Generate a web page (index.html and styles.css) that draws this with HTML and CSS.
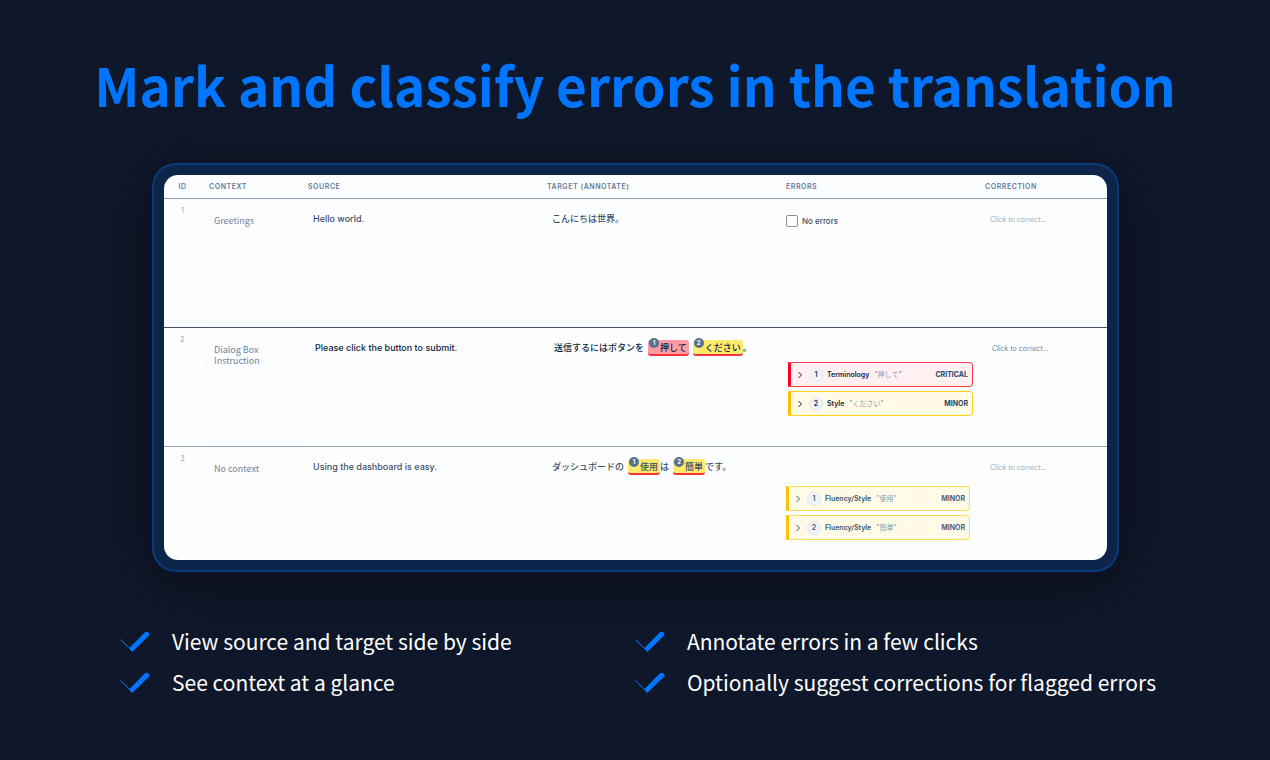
FILE: index.html
```html
<!DOCTYPE html>
<html lang="en">
<head>
    <meta charset="UTF-8">
    <meta name="viewport" content="width=device-width, initial-scale=1.0">
    <title>Mark and classify errors in the translation</title>
    <link rel="stylesheet" href="styles.css">
</head>
<body>
    <svg class="sprite" aria-hidden="true">
        <symbol id="check" viewBox="0 0 30 22">
            <path d="M0.5 8.5L11 19" fill="none" stroke="#0075ff" stroke-width="1"/>
            <path d="M9 17.4L24.4 1.8Q26.8 -0.2 28.6 1.4Q30.2 3.4 28.4 5.2L12.2 21Z" fill="#0075ff"/>
        </symbol>
        <symbol id="chevron" viewBox="0 0 6 8">
            <path d="M1.5 1L4.5 4L1.5 7" fill="none" stroke="currentColor" stroke-width="1"/>
        </symbol>
    </svg>

    <div class="container">
        <h1>Mark and classify errors in the translation</h1>

        <div class="frame">
            <div class="screen">
                <table>
                    <colgroup>
                        <col class="col-id">
                        <col class="col-context">
                        <col class="col-source">
                        <col>
                        <col class="col-errors">
                        <col class="col-correction">
                    </colgroup>
                    <thead>
                        <tr>
                            <th class="id">ID</th>
                            <th>Context</th>
                            <th>Source</th>
                            <th>Target (Annotate)</th>
                            <th>Errors</th>
                            <th>Correction</th>
                        </tr>
                    </thead>
                    <tbody>
                        <tr class="row-first">
                            <td class="id">1</td>
                            <td class="context">Greetings</td>
                            <td class="text">Hello world.</td>
                            <td class="text" lang="ja">こんにちは世界。</td>
                            <td class="errors">
                                <label class="no-errors"><input type="checkbox">No errors</label>
                            </td>
                            <td class="correction"><input type="text" placeholder="Click to correct..." aria-label="Correction 1"></td>
                        </tr>
                        <tr class="row-active">
                            <td class="id">2</td>
                            <td class="context">Dialog Box<br>Instruction</td>
                            <td class="text">Please click the button to submit.</td>
                            <td class="text" lang="ja">送信するにはボタンを<mark class="critical"><span class="badge">1</span>押して</mark><mark><span class="badge">2</span>ください</mark>。</td>
                            <td class="errors">
                                <div class="error-list">
                                    <button class="error critical">
                                        <svg class="chevron"><use href="#chevron"/></svg>
                                        <span class="number">1</span>
                                        <span class="name">Terminology</span>
                                        <span class="quote" lang="ja">"押して"</span>
                                        <span class="severity">CRITICAL</span>
                                    </button>
                                    <button class="error">
                                        <svg class="chevron"><use href="#chevron"/></svg>
                                        <span class="number">2</span>
                                        <span class="name">Style</span>
                                        <span class="quote" lang="ja">"ください"</span>
                                        <span class="severity">MINOR</span>
                                    </button>
                                </div>
                            </td>
                            <td class="correction"><input type="text" placeholder="Click to correct..." aria-label="Correction 2"></td>
                        </tr>
                        <tr class="row-last">
                            <td class="id">3</td>
                            <td class="context">No context</td>
                            <td class="text">Using the dashboard is easy.</td>
                            <td class="text" lang="ja">ダッシュボードの<mark><span class="badge">1</span>使用</mark>は<mark><span class="badge">2</span>簡単</mark>です。</td>
                            <td class="errors">
                                <div class="error-list">
                                    <button class="error">
                                        <svg class="chevron"><use href="#chevron"/></svg>
                                        <span class="number">1</span>
                                        <span class="name">Fluency/Style</span>
                                        <span class="quote" lang="ja">"使用"</span>
                                        <span class="severity">MINOR</span>
                                    </button>
                                    <button class="error">
                                        <svg class="chevron"><use href="#chevron"/></svg>
                                        <span class="number">2</span>
                                        <span class="name">Fluency/Style</span>
                                        <span class="quote" lang="ja">"簡単"</span>
                                        <span class="severity">MINOR</span>
                                    </button>
                                </div>
                            </td>
                            <td class="correction"><input type="text" placeholder="Click to correct..." aria-label="Correction 3"></td>
                        </tr>
                    </tbody>
                </table>
            </div>
        </div>

        <ul class="features">
            <li><svg class="check"><use href="#check"/></svg>View source and target side by side</li>
            <li><svg class="check"><use href="#check"/></svg>Annotate errors in a few clicks</li>
            <li><svg class="check"><use href="#check"/></svg>See context at a glance</li>
            <li><svg class="check"><use href="#check"/></svg>Optionally suggest corrections for flagged errors</li>
        </ul>
    </div>
</body>
</html>
```

FILE: styles.css
```css
* {
    box-sizing: border-box;
}
body {
    margin: 0;
    min-height: 100vh;
    background-color: #0f182a;
    font-family: 'Noto Sans CJK JP', 'Noto Sans', sans-serif;
    color: #fff;
}
.sprite {
    display: none;
}
.container {
    display: flex;
    flex-direction: column;
    min-height: 100vh;
    padding-top: 44px;
}
h1 {
    margin: 0;
    text-align: center;
    font-size: 53px;
    line-height: 80px;
    font-weight: 700;
    color: #0075ff;
}
.frame {
    margin: 39px 151px 0 152px;
    padding: 10px;
    border: 2px solid #093a7c;
    border-radius: 24px;
    background-color: #0d2549;
    box-shadow: 0 10px 60px rgba(12, 10, 22, 0.8);
}
.screen {
    overflow: hidden;
    border-radius: 14px;
    background-color: #fdfeff;
    font-family: Inter, 'Noto Sans CJK JP', sans-serif;
}
table {
    width: 100%;
    table-layout: fixed;
    border-collapse: separate;
    border-spacing: 0;
}
.col-id {
    width: 40px;
}
.col-context {
    width: 99px;
}
.col-source {
    width: 239px;
}
.col-errors {
    width: 199px;
}
.col-correction {
    width: 127px;
}
th {
    height: 24px;
    padding: 0 5px;
    border-bottom: 1px solid #8c9db5;
    text-align: left;
    font-size: 7px;
    line-height: 10px;
    font-weight: 600;
    letter-spacing: 0.08em;
    text-transform: uppercase;
    color: #627a99;
}
td {
    padding: 12px 10px 0;
    vertical-align: top;
    color: #3d4d66;
}
.row-first td {
    height: 129px;
    border-bottom: 1px solid #435066;
}
.row-active td {
    height: 119px;
    border-bottom: 1px solid #94a6be;
    color: #0f1f3d;
}
.row-last td {
    height: 113px;
}
.id {
    text-align: center;
    font-size: 7px;
    line-height: 12px;
}
th.id {
    padding: 0 3px 0 0;
}
.row-first .id,
.row-active .id,
.row-last .id {
    padding: 6px 3px 0 0;
    color: #8ea3c0;
}
td.context {
    padding-top: 16px;
    background-color: #fcfdfe;
    font-family: 'Noto Sans CJK JP', 'Noto Sans', sans-serif;
    font-size: 9px;
    line-height: 11px;
    color: #71839d;
}
.text {
    font-size: 9px;
    line-height: 16px;
    font-weight: 500;
}
.row-active .text {
    padding-left: 12px;
}
mark {
    display: inline-block;
    position: relative;
    height: 16px;
    margin-left: 4px;
    padding: 0 2px 0 12px;
    border-bottom: 2px solid #f5333f;
    border-radius: 3px;
    background-color: #ffea6b;
    color: inherit;
}
mark.critical {
    background-color: #ff9ba3;
}
.badge {
    position: absolute;
    top: -2px;
    left: 1px;
    width: 10px;
    height: 10px;
    border-radius: 50%;
    background-color: #56708f;
    text-align: center;
    font-size: 6px;
    line-height: 10px;
    font-weight: 700;
    color: #fff;
}
td.errors {
    padding: 16px 10px 0 5px;
}
.no-errors {
    display: flex;
    align-items: center;
    gap: 4px;
    font-size: 8px;
    line-height: 12px;
    font-weight: 500;
}
.no-errors input {
    appearance: none;
    width: 12px;
    height: 12px;
    margin: 0;
    border: 1px solid #8f9093;
    border-radius: 2px;
    background-color: #fff;
}
.error-list {
    display: flex;
    flex-direction: column;
    gap: 4px;
    padding-top: 23px;
}
.row-active .errors {
    padding-left: 7px;
    padding-right: 7px;
}
.row-active .error-list {
    padding-top: 18px;
}
.error {
    display: flex;
    align-items: center;
    width: 100%;
    height: 25px;
    padding: 0 4px 0 6px;
    border: 1px solid #ffdc55;
    border-left: 3px solid #ffc000;
    border-radius: 0 4px 4px 0;
    background-color: #fffbe6;
    font-family: inherit;
    font-size: 7px;
    line-height: 12px;
    font-weight: 600;
    color: #43536b;
}
.row-active .error {
    border-color: #ffd21c;
    border-left-color: #ffbf00;
    color: #14233f;
}
.row-active .error.critical {
    border-color: #ff3b52;
    border-left-color: #ff0024;
    background-color: #fff1f2;
}
.chevron {
    width: 6px;
    height: 8px;
    margin-right: 6px;
}
.number {
    width: 14px;
    height: 14px;
    margin-right: 4px;
    border: 1px solid #e0e7f0;
    border-radius: 50%;
    background-color: #f0f4fa;
}
.quote {
    height: 12px;
    margin-left: 5px;
    font-weight: 400;
    color: #8496b0;
}
.severity {
    margin-left: auto;
    font-weight: 700;
    color: #4a6282;
}
.row-active .severity {
    color: #294468;
}
.correction input {
    display: block;
    width: 100%;
    height: 16px;
    padding: 0;
    border: 0;
    background: none;
    font-family: inherit;
    font-size: 7px;
    font-style: italic;
    color: #3d4d66;
}
.correction input::placeholder {
    color: #9badc6;
}
.row-active .correction {
    padding-left: 12px;
}
.row-active .correction input::placeholder {
    color: #6b83a5;
}
.features {
    display: grid;
    grid-template-columns: 1fr 1fr;
    margin: 49px 114px 0 120px;
    padding: 0;
    list-style: none;
}
.features li {
    display: flex;
    align-items: center;
    gap: 22px;
    font-size: 21px;
    line-height: 41px;
    white-space: nowrap;
}
.check {
    flex: none;
    width: 30px;
    height: 22px;
}
```
